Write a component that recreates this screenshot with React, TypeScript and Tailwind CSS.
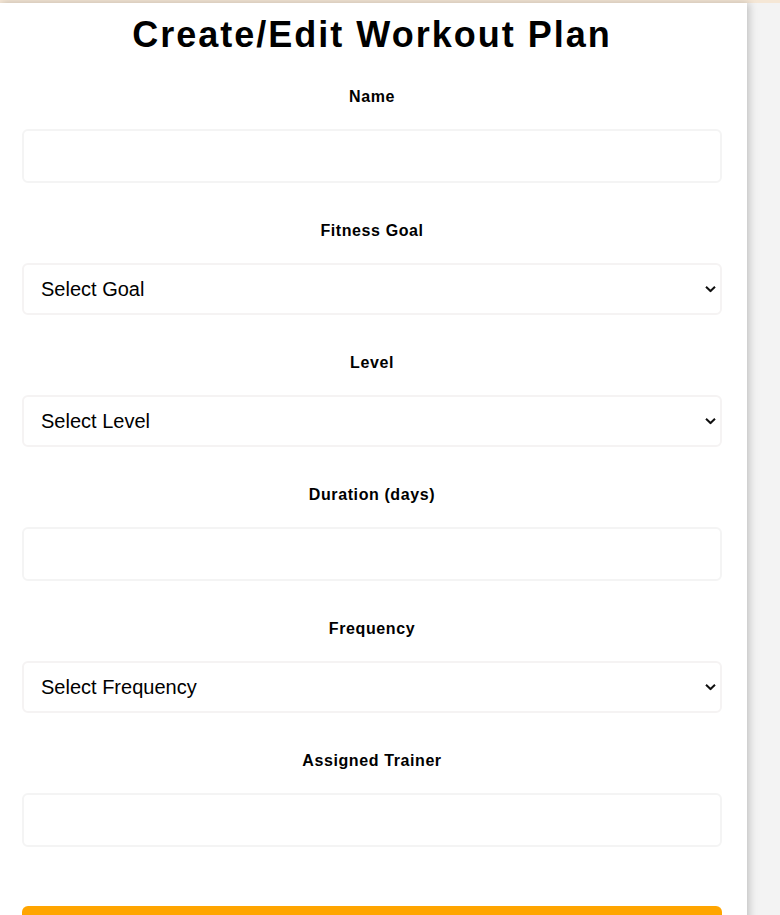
import React from 'react';

type Field = {
  label: string;
  kind: 'input' | 'select';
  placeholder?: string;
  type?: string;
};

const fields: Field[] = [
  { label: 'Name', kind: 'input', type: 'text' },
  { label: 'Fitness Goal', kind: 'select', placeholder: 'Select Goal' },
  { label: 'Level', kind: 'select', placeholder: 'Select Level' },
  { label: 'Duration (days)', kind: 'input', type: 'number' },
  { label: 'Frequency', kind: 'select', placeholder: 'Select Frequency' },
  { label: 'Assigned Trainer', kind: 'input', type: 'text' },
];

const Chevron: React.FC = () => (
  <svg
    className="pointer-events-none absolute right-[6px] top-1/2 -translate-y-1/2"
    width="11"
    height="7"
    viewBox="0 0 11 7"
    fill="none"
  >
    <path d="M1 1.2 L5.5 5.5 L10 1.2" stroke="#111" strokeWidth="2" />
  </svg>
);

const FormField: React.FC<{ field: Field }> = ({ field }) => {
  return (
    <div className="flex flex-col mb-[39px]">
      <label className="block text-center text-[16px] leading-[18px] font-bold tracking-[0.6px] text-black mb-[23px]">
        {field.label}
      </label>
      {field.kind === 'input' ? (
        <input
          type={field.type}
          className="h-[54px] w-full rounded-[6px] border-2 border-[#f4f4f4] bg-white px-[17px] text-[20px] outline-none"
        />
      ) : (
        <div className="relative">
          <select
            defaultValue=""
            className="h-[52px] w-full appearance-none rounded-[6px] border-2 border-[#f5f3f3] bg-white pl-[17px] pr-8 text-[20px] text-black outline-none"
          >
            <option value="">{field.placeholder}</option>
          </select>
          <Chevron />
        </div>
      )}
    </div>
  );
};

export default function App() {
  return (
    <div
      className="min-h-screen border-t-[3px] border-[#f5e7d6] bg-[#f3f3f3]"
      style={{ fontFamily: '"Liberation Sans", Arial, sans-serif' }}
    >
      <div className="w-[747px] min-h-[912px] bg-white shadow-[2px_0_8px_rgba(0,0,0,0.22)] pt-[12px] pb-10">
        <div className="ml-[22px] w-[700px] flex flex-col">
          <h1 className="text-center text-[36px] leading-[40px] font-bold tracking-[2px] text-black mb-[33px]">
            Create/Edit Workout Plan
          </h1>
          {fields.map((f) => (
            <FormField key={f.label} field={f} />
          ))}
          <button className="mt-[20px] h-[60px] w-full rounded-[6px] bg-[#ffa500] pt-[20px] text-[18px] font-bold text-white">
            Save Plan
          </button>
        </div>
      </div>
    </div>
  );
}
